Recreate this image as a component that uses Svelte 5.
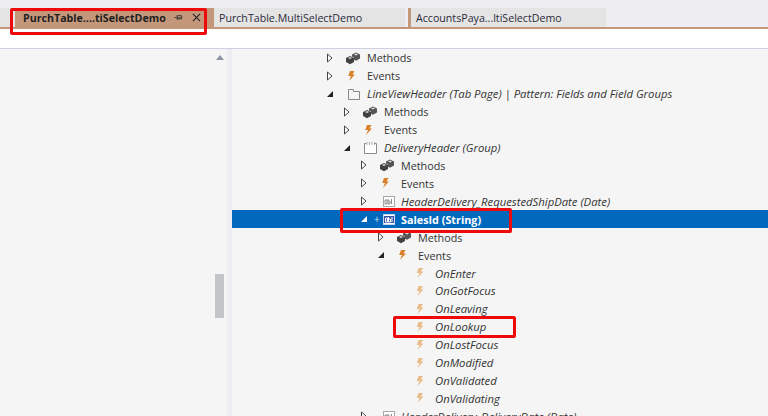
<script>
  const rows = [
    { t: 'Methods', l: 0, a: 'c', i: 'cube' },
    { t: 'Events', l: 0, a: 'c', i: 'bolt' },
    { t: 'LineViewHeader (Tab Page) | Pattern: Fields and Field Groups', l: 0, a: 'o', i: 'tab', it: 1 },
    { t: 'Methods', l: 1, a: 'c', i: 'cube' },
    { t: 'Events', l: 1, a: 'c', i: 'bolt' },
    { t: 'DeliveryHeader (Group)', l: 1, a: 'o', i: 'group', it: 1 },
    { t: 'Methods', l: 2, a: 'c', i: 'cube' },
    { t: 'Events', l: 2, a: 'c', i: 'bolt' },
    { t: 'HeaderDelivery_RequestedShipDate (Date)', l: 2, a: 'c', i: 'field', it: 1 },
    { t: 'SalesId (String)', l: 2, a: 'o', i: 'string', sel: 1 },
    { t: 'Methods', l: 3, a: 'c', i: 'cube' },
    { t: 'Events', l: 3, a: 'o', i: 'bolt' },
    { t: 'OnEnter', l: 4, i: 'leaf', it: 1 },
    { t: 'OnGotFocus', l: 4, i: 'leaf', it: 1 },
    { t: 'OnLeaving', l: 4, i: 'leaf', it: 1 },
    { t: 'OnLookup', l: 4, i: 'leaf', it: 1 },
    { t: 'OnLostFocus', l: 4, i: 'leaf', it: 1 },
    { t: 'OnModified', l: 4, i: 'leaf', it: 1 },
    { t: 'OnValidated', l: 4, i: 'leaf', it: 1 },
    { t: 'OnValidating', l: 4, i: 'leaf', it: 1 },
    { t: 'HeaderDelivery_DeliveryDate (Date)', l: 2, a: 'c', i: 'field', it: 1 }
  ];
  const tabs = ['PurchTable.MultiSelectDemo', 'AccountsPaya...ltiSelectDemo'];
</script>

{#snippet icon(kind)}
  <svg class="icon" viewBox="0 0 16 16" width="16" height="16" aria-hidden="true">
    {#if kind === 'cube'}
      <path d="M1 8 5 6l4 2v4l-4 2.200L1 12z" fill="#424242"/>
      <path d="M7 4.500 11 2.500l4 2v4l-4 2.200-2-1V7.500L7 6.500z" fill="#555"/>
      <path d="M3 8l2-1 2 1-2 1zM9 4.500l2-1 2 1-2 1z" fill="#ddd"/>
    {:else if kind === 'bolt'}
      <path d="M5 3h4.500L7.500 6.500H10L4 13l2-5H3.200z" fill="#d9822b"/>
    {:else if kind === 'leaf'}
      <path d="M5.500 3H10L8 6.500h2.500L4.500 13l2-5H3.700z" fill="#e8bd8b"/>
    {:else if kind === 'tab'}
      <path d="M3.500 13.500v-10h5v2h6v8z" fill="none" stroke="#8a8a8a"/>
    {:else if kind === 'group'}
      <path d="M4 3.500H2.500v10h12v-10H13" fill="#fff" stroke="#8a8a8a"/>
      <path d="M5 2v3M7.500 2v3M10 2v3M12.500 2v3" stroke="#aaa" stroke-width="1"/>
    {:else if kind === 'field'}
      <rect x="4.500" y="3.500" width="11" height="10" fill="#fff" stroke="#a8a8a8"/>
      <path d="M6 7h2v4H6zM9 6v5h2V8H9M12.500 6v5" fill="none" stroke="#8a8a8a"/>
    {:else if kind === 'string'}
      <rect x="4.500" y="3.500" width="11" height="10" fill="#fff" stroke="#c9d6ef"/>
      <rect x="5" y="5" width="10" height="7" fill="#3a55a5"/>
      <path d="M6.500 7h2v4h-2zM9.500 6v5h2V8h-2M13 6v5" fill="none" stroke="#fff"/>
    {/if}
  </svg>
{/snippet}

<div class="page">
  <header class="tabbar">
    <div class="stub"></div>
    <div class="tab active">
      <span class="tab-text">PurchTable....tiSelectDemo</span>
      <svg class="pin" viewBox="0 0 10 10" width="9" height="9" aria-hidden="true">
        <path d="M0.500 5H3M3.500 2.500v5M3.500 3h5v3.500h-5M3.500 5.500h5" fill="none" stroke="#333" stroke-width="1"/>
      </svg>
      <svg class="close" viewBox="0 0 10 10" width="9" height="9" aria-hidden="true">
        <path d="M1 1l8 8M9 1l-8 8" stroke="#222" stroke-width="1.300"/>
      </svg>
    </div>
    {#each tabs as t}
      <div class="tab">{t}</div>
    {/each}
  </header>
  <div class="strip"></div>
  <main class="panes">
    <aside class="left">
      <div class="scrollbar">
        <span class="up"></span>
        <span class="thumb"></span>
      </div>
    </aside>
    <div class="splitter"></div>
    <section class="tree">
      {#each rows as r}
        <div class="row" class:sel={r.sel} style="padding-left: {91 + r.l * 17}px">
          <span class="exp">
            {#if r.a === 'c'}
              <svg viewBox="0 0 8 10" width="8" height="10" aria-hidden="true"><path d="M1.500 1v8L6 5z" fill="#fff" stroke="#444"/></svg>
            {:else if r.a === 'o'}
              <svg viewBox="0 0 8 10" width="8" height="10" aria-hidden="true"><path d="M1 8h6V2z" fill={r.sel ? '#fff' : '#222'}/></svg>
            {/if}
          </span>
          {#if r.sel}<span class="plus">+</span>{/if}
          {@render icon(r.i)}
          <span class="label" class:it={r.it}>{r.t}</span>
        </div>
      {/each}
    </section>
  </main>
  <div class="mark m1"></div>
  <div class="mark m2"></div>
  <div class="mark m3"></div>
</div>

<style>
  :global(body) { margin: 0; }
  .page {
    position: relative;
    width: 768px;
    height: 416px;
    overflow: hidden;
    background: #f5f5f5;
    font-family: "Open Sans", "Noto Sans", sans-serif;
    font-size: 10.8px;
    color: #333;
  }
  .tabbar {
    height: 19px;
    display: flex;
    background: #eeeef2;
    border-top: 8px solid #eeeef2;
    border-bottom: 2px solid #c4977a;
    font-size: 10.65px;
  }
  .stub { width: 15px; background: #e4e4e4; }
  .tab {
    box-sizing: border-box;
    width: 194px;
    margin-right: 3px;
    padding-left: 5px;
    border-left: 3px solid #c4977a;
    background: #e4e4e4;
    display: flex;
    align-items: center;
    color: #2b2b3a;
    white-space: nowrap;
  }
  .tab:last-child { width: 198px; }
  .tab.active {
    width: 196px;
    margin-right: 0;
    padding-left: 8px;
    padding-right: 10px;
    border-left: 0;
    background: #c4977a;
    color: #1e1e1e;
    font-weight: 700;
  }
  .tab-text { flex: 1; }
  .pin { margin-right: 9px; }
  .strip { height: 19px; background: #fff; border-bottom: 1px solid #cfd0e3; }
  .panes { display: flex; height: 368px; }
  .left { width: 227px; display: flex; justify-content: flex-end; }
  .scrollbar {
    width: 13px;
    margin-right: 1px;
    display: flex;
    flex-direction: column;
    align-items: center;
    padding-top: 6px;
  }
  .up {
    width: 0;
    height: 0;
    border-left: 4px solid transparent;
    border-right: 4px solid transparent;
    border-bottom: 5px solid #8f94a3;
  }
  .thumb { width: 9px; height: 44px; margin-top: 214px; background: #c4c5c9; }
  .splitter { width: 5px; background: #eeeef2; }
  .tree { flex: 1; overflow: hidden; }
  .row { height: 17.93px; display: flex; align-items: center; position: relative; white-space: nowrap; }
  .row.sel { background: #0069bd; color: #fff; font-weight: 700; }
  .exp { width: 22px; flex: none; display: flex; align-items: center; padding-left: 3px; box-sizing: border-box; }
  .plus { position: absolute; left: 142px; font-weight: 400; font-size: 10px; color: #d5e5f5; }
  .icon { flex: none; }
  .label { margin-left: 6px; }
  .it { font-style: italic; font-size: 11.3px; }
  .mark {
    position: absolute;
    box-sizing: border-box;
    border: 3px solid #ee0a0a;
    border-radius: 2px;
  }
  .m1 { left: 10px; top: 8px; width: 197px; height: 27px; }
  .m2 { left: 340px; top: 208px; width: 172px; height: 25px; }
  .m3 { left: 393px; top: 316px; width: 123px; height: 22px; }
</style>
